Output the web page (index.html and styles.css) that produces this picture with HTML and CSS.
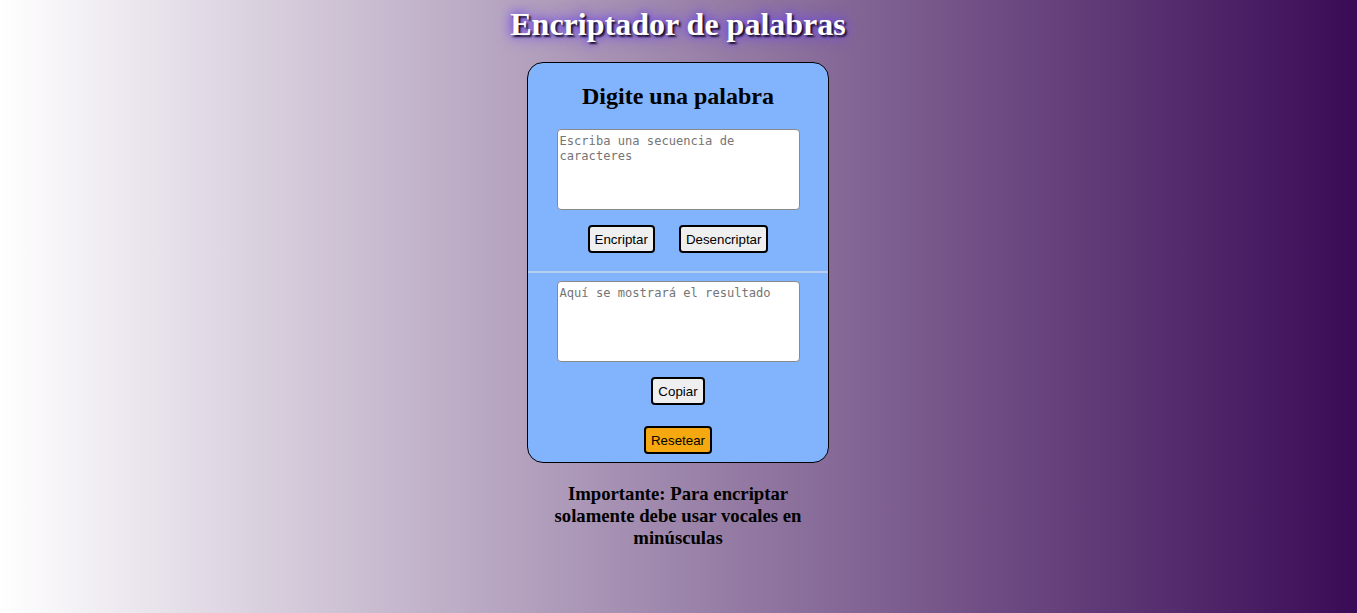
FILE: index.html
```html
<!DOCTYPE html>
<html lang="es">
<head>
<meta charset="utf-8">
<title>Encriptador de palabras</title>
<link rel="stylesheet" href="styles.css">
</head>
<body>
<main class="page">
  <h1 class="title">Encriptador de palabras</h1>
  <section class="card">
    <h2 class="card-title">Digite una palabra</h2>
    <textarea class="field" placeholder="Escriba una secuencia de caracteres"></textarea>
    <div class="actions">
      <button class="btn">Encriptar</button>
      <button class="btn">Desencriptar</button>
    </div>
    <hr class="divider">
    <textarea class="field" placeholder="Aquí se mostrará el resultado"></textarea>
    <div class="actions">
      <button class="btn">Copiar</button>
    </div>
    <div class="actions">
      <button class="btn btn-reset">Resetear</button>
    </div>
  </section>
  <p class="note">Importante: Para encriptar solamente debe usar vocales en minúsculas</p>
</main>
</body>
</html>
```

FILE: styles.css
```css
html, body {
  margin: 0;
  height: 100%;
}
body {
  background: linear-gradient(to right, #ffffff 0%, #3a0b56 100%);
  font-family: "Liberation Serif", "Times New Roman", serif;
  color: #000;
}
.page {
  display: flex;
  flex-direction: column;
  align-items: center;
  padding-right: 1px;
}
.title {
  margin: 6px 0 0;
  font-size: 32px;
  line-height: 37px;
  font-weight: bold;
  color: #fff;
  text-shadow: 2px 2px 2px #1a1030, 0 0 10px #6a40e0, 0 0 16px #7a50f0;
}
.card {
  margin-top: 19px;
  width: 300px;
  box-sizing: content-box;
  border: 1px solid #000;
  border-radius: 16px;
  background: #82b3fd;
  display: flex;
  flex-direction: column;
  align-items: center;
  padding: 19px 0 8px;
}
.card-title {
  margin: 0 0 19px;
  font-size: 24px;
  line-height: 28px;
  font-weight: bold;
}
.field {
  box-sizing: border-box;
  width: 243px;
  height: 81px;
  margin: 0;
  padding: 4px 2px 2px;
  border: 1px solid #8a8a8a;
  border-radius: 4px;
  background: #fff;
  font-family: "DejaVu Sans Mono", "Liberation Mono", monospace;
  font-size: 12.1px;
  line-height: 15px;
  resize: none;
}
.field::placeholder {
  color: #757575;
}
.actions {
  display: flex;
  justify-content: center;
  gap: 24px;
  margin-top: 15px;
}
.btn {
  box-sizing: border-box;
  height: 28px;
  padding: 0 5px;
  border: 2px solid #000;
  border-radius: 4px;
  background: #efefef;
  font-family: "Liberation Sans", Arial, sans-serif;
  font-size: 13.333px;
  color: #000;
}
.btn-reset {
  background: #f5a80f;
}
.actions + .actions {
  margin-top: 21px;
}
.divider {
  align-self: stretch;
  margin: 18px 0 8px;
  border: 0;
  border-top: 2px solid #b7cdf0;
  height: 0;
}
.note {
  margin: 20px 0 0;
  width: 270px;
  text-align: center;
  font-size: 18.72px;
  line-height: 22px;
  font-weight: bold;
}
```
